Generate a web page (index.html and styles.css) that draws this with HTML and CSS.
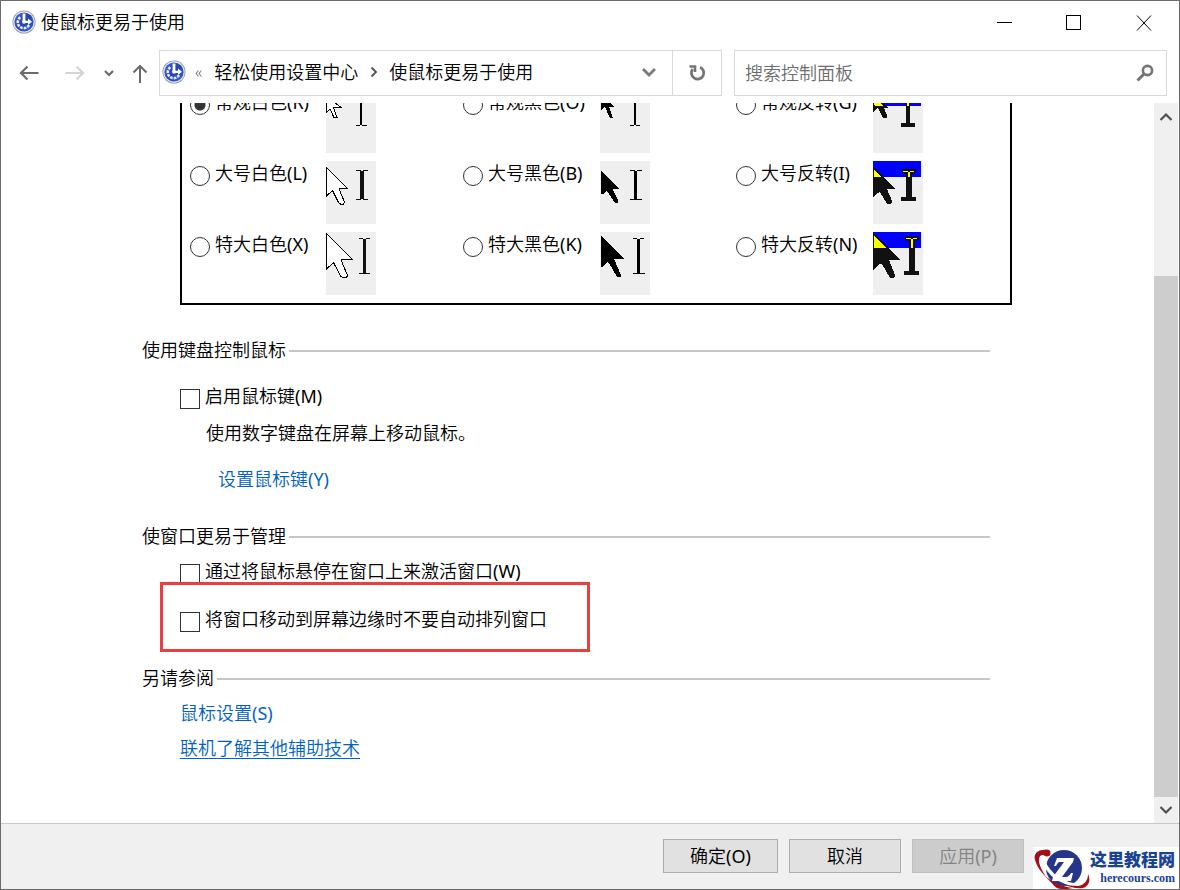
FILE: index.html
```html
<!DOCTYPE html>
<html lang="zh-CN">
<head>
<meta charset="utf-8">
<title>使鼠标更易于使用</title>
<link rel="stylesheet" href="styles.css">
</head>
<body>
<svg class="defs" aria-hidden="true">
  <defs>
    <linearGradient id="ball" x1="0" y1="0" x2="1" y2="1">
      <stop offset="0" stop-color="#4a66c8"/><stop offset="0.5" stop-color="#2743b0"/><stop offset="1" stop-color="#2f62d2"/>
    </linearGradient>
    <symbol id="ease" viewBox="0 0 24 24">
      <circle cx="12" cy="12" r="11.500" fill="#8d949f"/>
      <circle cx="12" cy="12" r="10.700" fill="#e9edf2"/>
      <circle cx="12" cy="12" r="9.600" fill="url(#ball)"/>
      <path d="M8.300 7.300A6 6 0 1 0 17.300 14.500" fill="none" stroke="#e4ecfc" stroke-width="2.600" stroke-dasharray="2.700 1"/>
      <path d="M10.600 3.500h2.800V12h-2.800z" fill="#fff"/>
      <path d="M11 10.700h5V8.500l4 3.300-4 3.300v-2.200h-5z" fill="#fff"/>
      <circle cx="12" cy="11.800" r="1.900" fill="#fff"/>
    </symbol>
  </defs>
</svg>
<div class="window">
  <header class="titlebar">
    <svg class="app-icon"><use href="#ease"/></svg>
    <h1 class="title">使鼠标更易于使用</h1>
    <div class="caption">
      <button class="cap-btn" aria-label="最小化"><svg width="16" height="16" shape-rendering="crispEdges"><path d="M1 7.500h15" stroke="#000"/></svg></button>
      <button class="cap-btn" aria-label="最大化"><svg width="16" height="16" shape-rendering="crispEdges"><path d="M.5.5h14v14H.5z" fill="none" stroke="#000"/></svg></button>
      <button class="cap-btn" aria-label="关闭"><svg width="16" height="16"><path d="M1 .5l14 15M15 .5l-14 15" stroke="#000"/></svg></button>
    </div>
  </header>

  <nav class="navbar">
    <div class="nav-buttons">
      <button class="nav-btn" aria-label="后退"><svg width="20" height="16"><path d="M19.500 8H2M8.500 1.500L2 8l6.500 6.500" fill="none" stroke="#6b6b6b" stroke-width="2.200"/></svg></button>
      <button class="nav-btn" aria-label="前进"><svg width="20" height="16"><path d="M.5 8H18M11.500 1.500L18 8l-6.500 6.500" fill="none" stroke="#d4d4d4" stroke-width="2.200"/></svg></button>
      <button class="nav-btn" aria-label="最近浏览的位置"><svg width="10" height="8"><path d="M1 2l4 4 4-4" fill="none" stroke="#6b6b6b" stroke-width="2.200"/></svg></button>
      <button class="nav-btn" aria-label="向上"><svg width="16" height="20"><path d="M8 20V3M1.500 9.500L8 3l6.500 6.500" fill="none" stroke="#6b6b6b" stroke-width="2"/></svg></button>
    </div>
    <div class="address">
      <svg class="app-icon"><use href="#ease"/></svg>
      <span class="more">«</span>
      <a class="crumb" href="#">轻松使用设置中心</a>
      <svg class="crumb-sep" width="8" height="12"><path d="M1.500 1.500L6 6l-4.500 4.500" fill="none" stroke="#555" stroke-width="1.900"/></svg>
      <a class="crumb" href="#">使鼠标更易于使用</a>
      <button class="drop" aria-label="历史记录"><svg width="14" height="10"><path d="M1 2L7 8l6-6" fill="none" stroke="#7a7a7a" stroke-width="2.800"/></svg></button>
      <button class="refresh" aria-label="刷新"><svg width="18" height="18"><path d="M12 3.200A6.200 6.200 0 1 1 4.600 5.200" fill="none" stroke="#757575" stroke-width="2.800"/><path d="M1.500 2.500H7V8" fill="none" stroke="#757575" stroke-width="2.600"/></svg></button>
    </div>
    <div class="search">
      <input class="search-input" type="text" placeholder="搜索控制面板" aria-label="搜索控制面板">
      <svg width="18" height="18"><circle cx="11.500" cy="6.500" r="4.600" fill="none" stroke="#757575" stroke-width="2.600"/><path d="M8 10L1.500 16.500" stroke="#757575" stroke-width="3"/></svg>
    </div>
  </nav>

  <div class="body">
    <main class="content">
      <div class="pointers">
        <div class="cell">
          <label class="option"><input class="radio" type="radio" name="p" checked><span>常规白色<span class="key">(R)</span></span></label>
          <svg class="sample" viewBox="0 0 50 63"><path d="M.5 6.500V22.500L4 19l4 8.500h3L7.500 17.500H15z" fill="#fff" stroke="#000"/><path d="M34 12h2v23h-2zM30 35h4v1h-4zM36 35h5v1h-5z"/></svg>
        </div>
        <div class="cell">
          <label class="option"><input class="radio" type="radio" name="p"><span>常规黑色<span class="key">(O)</span></span></label>
          <svg class="sample" viewBox="0 0 50 63"><path d="M1 4v16l4-3 5 11h3L9 17h5z"/><path d="M34 12h2v23h-2zM30 35h4v1h-4zM36 35h4v1h-4z"/></svg>
        </div>
        <div class="cell">
          <label class="option"><input class="radio" type="radio" name="p"><span>常规反转<span class="key">(G)</span></span></label>
          <svg class="sample" viewBox="0 0 50 63"><path d="M0 0h48v16H0z" fill="#00f"/><path d="M0 4v18l5-4 5 10h4v-3l-3-7h5z" fill="#111"/><path d="M1 7v8l1 1h9z" fill="#ff0"/><path d="M33 10h4v23h5v4H28v-4h5z" fill="#111"/><path d="M34 10h2v6h-2z" fill="#ff0"/></svg>
        </div>
        <div class="cell">
          <label class="option"><input class="radio" type="radio" name="p"><span>大号白色<span class="key">(L)</span></span></label>
          <svg class="sample" viewBox="0 0 50 63"><path d="M.5 6.500V35L6.500 29.500 12.500 41.500l2 1.500h3l1-2L13.500 29v-1.500H21.500z" fill="#fff" stroke="#000"/><path d="M30 9h5v1h2V9h5v1h-4v28h4v1h-5v-1h-2v1h-5v-1h4V10h-4z" fill="#111"/></svg>
        </div>
        <div class="cell">
          <label class="option"><input class="radio" type="radio" name="p"><span>大号黑色<span class="key">(B)</span></span></label>
          <svg class="sample" viewBox="0 0 50 63"><path d="M1 9v24h2l4-3 8 12h3v-3l-5-10v-1h6z"/><path d="M30 9h5v1h2V9h5v1h-5v28h5v1H30v-1h4V10h-4z"/></svg>
        </div>
        <div class="cell">
          <label class="option"><input class="radio" type="radio" name="p"><span>大号反转<span class="key">(I)</span></span></label>
          <svg class="sample" viewBox="0 0 50 63"><path d="M0 0h48v16H0z" fill="#00f"/><path d="M0 6l22 22h-8l5 12v2l-2 1h-3L7 31l-3 1-4 4z" fill="#111"/><path d="M1 9l7 7H1z" fill="#ff0"/><path d="M29 8h6l1 1 1-1h6v4l-4 1v23h4v4H28v-4h5V13l-4-1z" fill="#111"/><path d="M30 10h5v1h2v-1h4v1h-4v5h-2v-5h-5z" fill="#ff0"/></svg>
        </div>
        <div class="cell">
          <label class="option"><input class="radio" type="radio" name="p"><span>特大白色<span class="key">(X)</span></span></label>
          <svg class="sample" viewBox="0 0 50 63"><path d="M.5 1.500V37L7.500 30.500 14.500 44l2 1.500h4l1-2L15.500 29v-1.500H26.500z" fill="#fff" stroke="#000"/><path d="M33 6h4v1h3V6h4v1h-4v34h4v1H33v-1h4V7h-4z" fill="#111"/></svg>
        </div>
        <div class="cell">
          <label class="option"><input class="radio" type="radio" name="p"><span>特大黑色<span class="key">(K)</span></span></label>
          <svg class="sample" viewBox="0 0 50 63"><path d="M1 4l23 22v1H14l7 16v2h-4L9 31l-2-1-5 5H1z"/><path d="M33 6h4v1h3V6h4v1h-4v34h5v1H33v-1h4V7h-4z"/></svg>
        </div>
        <div class="cell">
          <label class="option"><input class="radio" type="radio" name="p"><span>特大反转<span class="key">(N)</span></span></label>
          <svg class="sample" viewBox="0 0 50 63"><path d="M0 0h48v16H0z" fill="#00f"/><path d="M0 1l27 27H16l6 15v2l-2 1h-3L9 32H6l-6 6z" fill="#111"/><path d="M1 4l12 12H1z" fill="#ff0"/><path d="M32 4h6l1 1 1-1h6v4l-4 1v30h4v4H31v-4h5V9l-4-1z" fill="#111"/><path d="M33 6h5v1h2V6h4v1h-4v9h-2V7h-5z" fill="#ff0"/></svg>
        </div>
      </div>

      <section class="group">
        <h2 class="heading">使用键盘控制鼠标</h2>
        <div class="items">
          <label class="option keys"><input class="check" type="checkbox"><span>启用鼠标键<span class="key">(M)</span></span></label>
          <p class="note">使用数字键盘在屏幕上移动鼠标。</p>
          <a class="link setup" href="#">设置鼠标键<span class="key">(Y)</span></a>
        </div>
      </section>

      <section class="group">
        <h2 class="heading">使窗口更易于管理</h2>
        <div class="items manage">
          <label class="option"><input class="check" type="checkbox"><span>通过将鼠标悬停在窗口上来激活窗口<span class="key">(W)</span></span></label>
          <div class="marked">
            <label class="option"><input class="check" type="checkbox"><span>将窗口移动到屏幕边缘时不要自动排列窗口</span></label>
          </div>
        </div>
      </section>

      <section class="group">
        <h2 class="heading">另请参阅</h2>
        <div class="items related">
          <a class="link" href="#">鼠标设置<span class="key">(S)</span></a>
          <a class="link underlined" href="#">联机了解其他辅助技术</a>
        </div>
      </section>
    </main>
    <div class="scrollbar">
      <button class="scroll-btn" aria-label="向上滚动"><svg width="14" height="10"><path d="M1.500 9L7 3.500 12.500 9" fill="none" stroke="#505050" stroke-width="2.200"/></svg></button>
      <div class="track"><div class="thumb"></div></div>
      <button class="scroll-btn" aria-label="向下滚动"><svg width="14" height="10"><path d="M1.500 2L7 7.500 12.500 2" fill="none" stroke="#505050" stroke-width="2.200"/></svg></button>
    </div>
  </div>

  <footer class="footer">
    <button class="btn ok">确定<span class="key">(O)</span></button>
    <button class="btn">取消</button>
    <button class="btn" disabled>应用<span class="key">(P)</span></button>
  </footer>

  <div class="badge">
    <svg class="badge-logo" width="57" height="43" viewBox="0 0 57 43">
      <circle cx="31" cy="21" r="18" fill="#27348b"/>
      <path d="M10 10c0 6 4 12 10 18 8 7 20 11 33 11" fill="none" stroke="#fff" stroke-width="3.500"/>
      <path d="M14 3C5 2 0 7 2 13c2 7 6 12 12 18-5-7-8-13-8-18 0-5 3-6 8-4z" fill="#a31118"/>
      <path d="M12 29c6 6 9 10 12 12 6 2 12 1 16 0-9-1-18-4-28-12z" fill="#a31118"/>
      <path d="M30 37c6 3 14 5 20 4 6-2 8-8 5-14 0 7-4 11-10 12-5 0-10-1-15-2z" fill="#a31118"/>
      <circle cx="14" cy="6" r="3.500" fill="#a31118"/>
      <path d="M24 11h17l-1 4-11 15h4c2 0 4-2 5-4h2l-2 8H19l1-4 11-15h-4c-2 0-3 2-4 4h-2z" fill="#fff"/>
    </svg>
    <div class="badge-text">
      <span class="badge-name">这里教程网</span>
      <span class="badge-url">herecours.com</span>
    </div>
  </div>
</div>
</body>
</html>
```
FILE: styles.css
```css
* { box-sizing: border-box; }

body {
  margin: 0;
  color: #000;
  font: 18px/24px "Noto Sans", "Noto Sans CJK SC", sans-serif;
  font-weight: 350;
}

button, input { font: inherit; color: inherit; margin: 0; }
button { padding: 0; border: 0; background: none; }
h1, h2, p { margin: 0; font: inherit; }
svg { display: block; flex: none; }
a { color: inherit; text-decoration: none; }

.defs { position: absolute; width: 0; height: 0; }
.key { font-weight: 400; }

.window {
  position: relative;
  display: flex;
  flex-direction: column;
  height: 100vh;
  border: 1px solid #6c6a6c;
  background: #fff;
  overflow: hidden;
}

.app-icon { width: 24px; height: 24px; }

/* Title bar */
.titlebar { display: flex; flex: none; height: 49px; padding-left: 11px; }
.titlebar .app-icon { margin-top: 9px; }
.title { margin: 9px 0 0 5px; }
.caption { display: flex; margin-left: auto; height: 44px; }
.cap-btn { width: 70px; display: flex; align-items: center; justify-content: center; }

/* Navigation */
.navbar {
  display: grid;
  grid-template-columns: 158px minmax(0, 568fr) minmax(0, 440fr);
  flex: none;
  height: 46px;
  margin-bottom: 7px;
  padding-right: 12px;
}
.nav-buttons { display: flex; align-items: center; padding-left: 18px; }
.nav-btn:nth-child(2) { margin-left: 26px; }
.nav-btn:nth-child(3) { margin-left: 19px; }
.nav-btn:nth-child(4) { margin-left: 18px; }

.address, .search { display: flex; align-items: center; border: 1px solid #d9d9d9; }
.address { padding: 0 0 2px 2px; margin-right: 5px; }
.more { margin: 0 12px 0 9px; color: #555; font-size: 16px; }
.crumb { white-space: nowrap; }
.crumb-sep { margin: 0 11px 0 12px; }
.drop { margin-left: auto; padding: 10px 16px; }
.refresh { display: flex; align-items: center; justify-content: center; align-self: stretch; width: 49px; margin-bottom: -2px; border-left: 1px solid #d9d9d9; }

.search { margin-left: 7px; padding: 0 12px 0 10px; }
.search-input { flex: 1; min-width: 0; padding: 0; border: 0; outline: 0; background: none; }
.search-input::placeholder { color: #6d6d6d; opacity: 1; }

/* Scrolled content */
.body { display: flex; flex: 1; min-height: 0; }
.content { flex: 1; min-width: 0; padding-left: 141px; overflow: hidden; }

.pointers {
  display: grid;
  grid-template-columns: repeat(3, 1fr);
  row-gap: 8px;
  max-width: 832px;
  margin: -30px 0 33px 38px;
  padding: 15px 1px 8px 8px;
  border: 2px solid #000;
}
.cell { display: flex; align-items: flex-start; }
.cell .option { width: 136px; }
.cell:not(:nth-child(3n + 1)) .option { width: 137px; }
.sample { width: 50px; height: 63px; background: #efefef; shape-rendering: crispEdges; }

.option { display: flex; align-items: flex-start; gap: 5px; white-space: nowrap; }
.radio, .check {
  flex: none;
  appearance: none;
  width: 20px;
  height: 20px;
  margin-top: 5px;
  border: 1px solid #333;
  background: #fff;
}
.radio { border-radius: 50%; }
.radio:checked { background: radial-gradient(circle, #333 5px, #fff 6px); }

.group { max-width: 848px; }
.heading { display: flex; align-items: center; gap: 3px; }
.heading::after { content: ""; flex: 1; height: 2px; margin-top: 2px; background: #c8c8c8; }
.items { display: flex; flex-direction: column; align-items: flex-start; margin-left: 38px; }
.keys { margin-top: 22px; }
.note { margin: 12px 0 22px 26px; }
.link { color: #0062c4; }
.setup { margin: 0 0 33px 38px; }
.manage { gap: 23px; padding: 11px 0 34px; }
.related { gap: 11px; padding-top: 11px; }
.underlined { text-decoration: underline; text-decoration-thickness: 1px; text-underline-offset: 3px; }

.marked { position: relative; }
.marked::after {
  content: "";
  position: absolute;
  inset: -25px -43px -20px -20px;
  border: 3px solid #e84040;
  pointer-events: none;
}

/* Scroll bar */
.scrollbar { display: flex; flex-direction: column; flex: none; width: 24px; margin-right: 1px; background: #f0f0f0; }
.scroll-btn { display: flex; align-items: center; justify-content: center; height: 26px; }
.track { display: flex; flex: 1; flex-direction: column; justify-content: flex-end; }
.thumb { height: 78%; background: #cdcdcd; }

/* Footer */
.footer {
  display: flex;
  flex: none;
  justify-content: flex-end;
  gap: 11px;
  padding: 15px 155px 16px;
  border-top: 1px solid #c8c8c8;
  background: #f0f0f0;
}
.btn { width: 112px; height: 34px; border: 1px solid #adadad; background: #e1e1e1; }
.ok { width: 115px; }
.btn:disabled { border-color: #bfbfbf; background: #ccc; color: #838383; }

/* Site badge */
.badge {
  position: absolute;
  right: -1px;
  bottom: -1px;
  display: flex;
  width: 147px;
  height: 43px;
  background: #fff;
}
.badge-text { display: flex; flex-direction: column; align-items: flex-end; white-space: nowrap; }
.badge-name { color: #1a4396; font: 900 17px/24px "Noto Sans CJK SC", sans-serif; }
.badge-url { color: #1a4396; font: bold 12px/14px "Liberation Serif", serif; }
```
